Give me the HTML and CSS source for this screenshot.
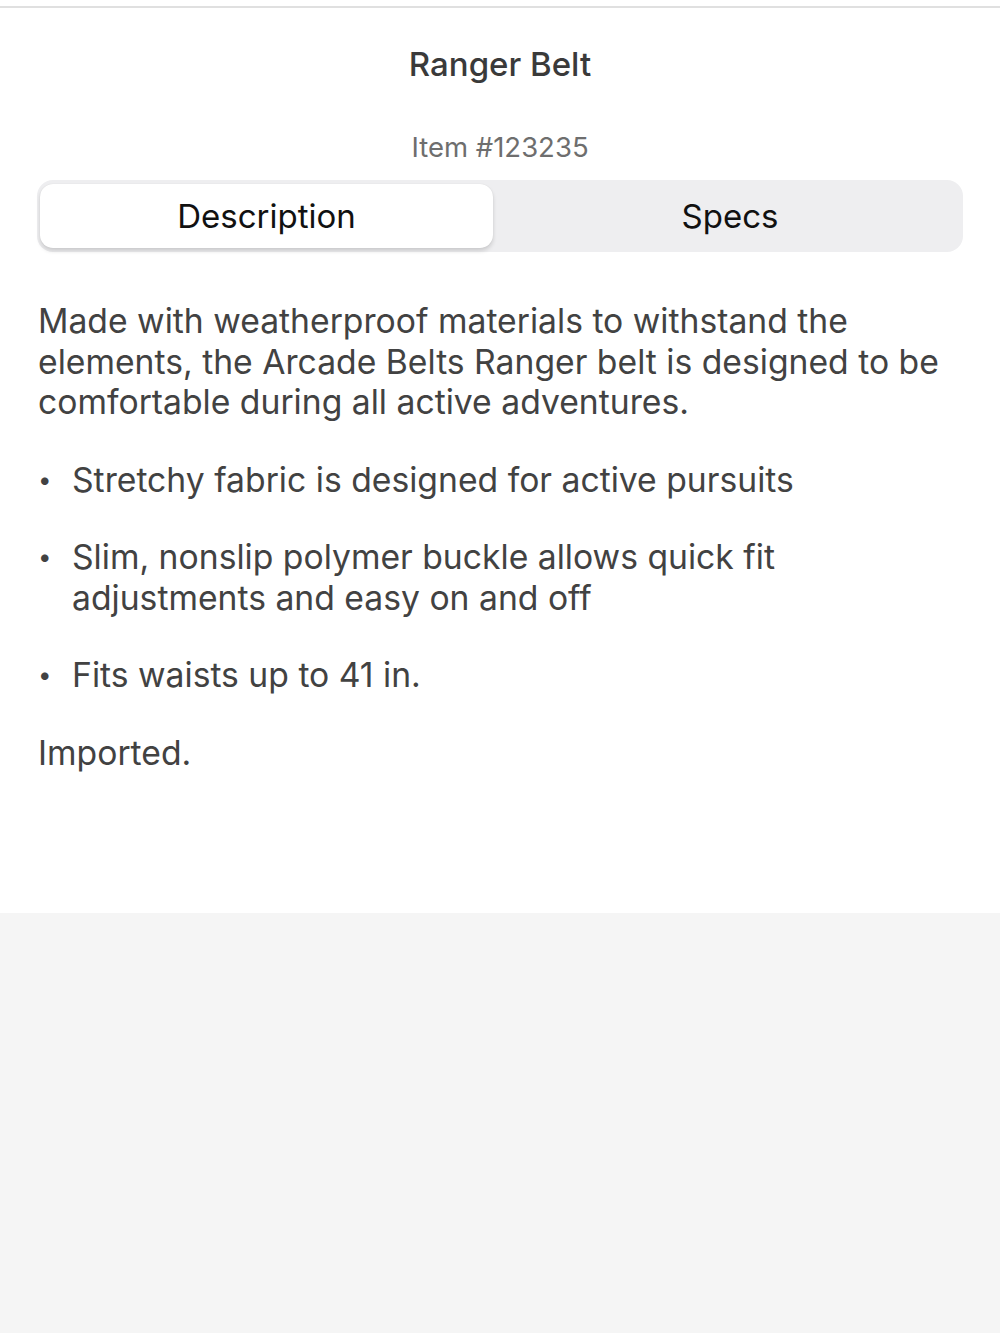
FILE: index.html
```html
<!DOCTYPE html>
<html lang="en">
<head>
    <meta charset="UTF-8">
    <meta name="viewport" content="width=device-width, initial-scale=1.0">
    <title>Ranger Belt</title>
    <link rel="stylesheet" href="styles.css">
</head>
<body>
    <div class="sheet">
        <div class="grabber-line"></div>
        <h1 class="title">Ranger Belt</h1>
        <div class="item-number">Item #123235</div>
        <div class="segmented">
            <button class="segment active">Description</button>
            <button class="segment">Specs</button>
        </div>
        <div class="description">
            <p>Made with weatherproof materials to withstand the elements, the Arcade Belts Ranger belt is designed to be comfortable during all active adventures.</p>
            <ul>
                <li>Stretchy fabric is designed for active pursuits</li>
                <li>Slim, nonslip polymer buckle allows quick fit adjustments and easy on and off</li>
                <li>Fits waists up to 41 in.</li>
            </ul>
            <p>Imported.</p>
        </div>
    </div>
</body>
</html>
```

FILE: styles.css
```css
/* General Styles */
body {
    font-family: 'Inter', 'Roboto', sans-serif;
    margin: 0;
    background: #f5f5f5;
    color: #444;
}

.sheet {
    background: #fff;
    height: 913px;
    padding-top: 6px;
    box-sizing: border-box;
}

.grabber-line {
    height: 2px;
    background: #e0e0e0;
}

.title {
    margin: 36px 0 0;
    font-size: 33px;
    font-weight: 500;
    line-height: 40px;
    text-align: center;
    color: #3a3a3a;
}

.item-number {
    margin-top: 46px;
    font-size: 27.5px;
    line-height: 34px;
    text-align: center;
    color: #6e6e6e;
}

.segmented {
    display: grid;
    grid-template-columns: 1fr 1fr;
    margin: 16px 37px 0;
    padding: 4px 3px;
    background: #eeeef0;
    border-radius: 16px;
}

.segment {
    height: 64px;
    border: none;
    border-radius: 13px;
    background: transparent;
    font-family: inherit;
    font-size: 33px;
    color: #111;
    cursor: pointer;
}

.segment.active {
    margin-right: 7px;
    background: #fff;
    box-shadow: 0 3px 4px rgba(0, 0, 0, 0.14), 0 0 1px rgba(0, 0, 0, 0.12);
}

.description {
    padding: 0 37px 0 38px;
    font-size: 33.7px;
    line-height: 40.5px;
    color: #424242;
}

.description p {
    margin: 49px 0 0;
}

.description ul {
    margin: 37px 0 0;
    padding: 0;
    list-style: none;
}

.description li {
    display: flex;
    margin-bottom: 37px;
}

.description li::before {
    content: "•";
    flex: 0 0 34px;
    font-size: 24px;
}

.description ul + p {
    margin-top: 0;
}
```
